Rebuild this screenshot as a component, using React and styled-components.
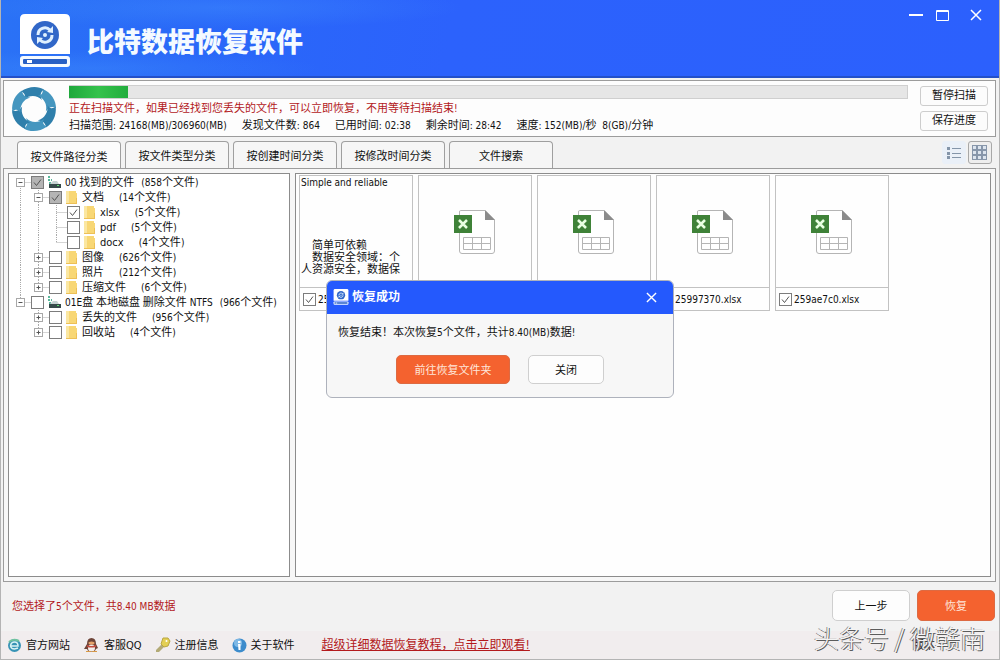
import React, { useState } from "react"
import styled, { createGlobalStyle } from "styled-components"

const GlobalStyle = createGlobalStyle`
  * {
    box-sizing: border-box;
  }

  body {
    margin: 0;
    font-family: "DejaVu Sans Condensed", "Noto Sans CJK SC", sans-serif;
    font-size: 11px;
    line-height: 15px;
    color: #111111;
    background: #f2f2f2;
  }

  button, input {
    font-family: inherit;
    font-size: inherit;
    margin: 0;
  }
`

const Window = styled.div`
  min-height: 100vh;
  display: flex;
  flex-direction: column;
  border: 1px solid #b4b4b4;
  border-top: 0;
  position: relative;
`

const TitleBar = styled.header`
  height: 78px;
  flex-shrink: 0;
  display: flex;
  justify-content: space-between;
  padding: 5px 13px 0 17px;
  background:
    radial-gradient(ellipse at 22% 10%, rgba(70, 150, 255, 0.35), transparent 22%),
    radial-gradient(ellipse at 9% 90%, rgba(70, 150, 255, 0.3), transparent 18%),
    linear-gradient(100deg, #2a72f6 0%, #2968f8 20%, #2c62fc 45%, #2c60fd 100%);
  border-bottom: 2px solid #2450c8;
`

const Brand = styled.div`
  display: flex;
  align-items: center;
  gap: 15px;
`

const AppTitle = styled.h1`
  margin: 0;
  padding-top: 4px;
  font-size: 27px;
  line-height: 32px;
  font-weight: 900;
  color: #f4faff;
`

const WindowButtons = styled.div`
  display: flex;
  align-self: flex-start;
  gap: 6px;
`

const IconButton = styled.button`
  width: 20px;
  height: 20px;
  padding: 0;
  display: flex;
  align-items: center;
  justify-content: center;
  border: 0;
  background: transparent;
  color: #ffffff;
`

const CloseButton = styled(IconButton)`
  margin-left: 8px;
`

const ScanPanel = styled.section`
  display: flex;
  align-items: center;
  margin: 2px 3px 0 2px;
  padding: 0 7px;
  height: 57px;
  gap: 12px;
  background: #fdfdfd;
  border: 1px solid #9c9c9c;

  > svg {
    flex-shrink: 0;
  }
`

const ScanInfo = styled.div`
  flex: 1;
  display: flex;
  flex-direction: column;
  gap: 2px;
`

const Track = styled.div`
  height: 14px;
  background: #e6e6e6;
  border: 1px solid #cfcfcf;
  border-left: 0;
`

const Bar = styled.div`
  height: 100%;
  background: linear-gradient(90deg, #1fa83c, #35c24c 50%, #22ad3d);
`

const ScanNotice = styled.p`
  margin: 0;
  color: #b3191c;
`

const Stats = styled.div`
  display: flex;
  gap: 15px;
`

const Num = styled.span`
  font-size: 10px;
  white-space: pre-wrap;
`

const Stack = styled.div`
  display: flex;
  flex-direction: column;
  gap: 5px;
`

const SmallButton = styled.button`
  width: 68px;
  height: 20px;
  padding: 0;
  line-height: 16px;
  color: #111111;
  background: #fcfcfc;
  border: 1px solid #cdcdcd;
  border-radius: 3px;
`

const TabRow = styled.div`
  display: flex;
  justify-content: space-between;
  align-items: flex-end;
  height: 31px;
  padding: 0 7px 0 16px;
`

const Tabs = styled.div`
  display: flex;
  align-items: flex-start;
  gap: 4px;
`

const Tab = styled.button`
  width: 104px;
  height: ${props => (props.$active ? "28px" : "27px")};
  padding: 0;
  color: #111111;
  background: ${props => (props.$active ? "#fcfcfc" : "#f6f6f6")};
  border: 1px solid #9f9f9f;
  border-bottom: 0;
  border-radius: 4px 4px 0 0;
  margin-bottom: ${props => (props.$active ? "-1px" : "0")};
`

const ViewSwitch = styled.div`
  display: flex;
  gap: 2px;
  align-self: center;
`

const ViewButton = styled.button`
  width: 24px;
  height: 23px;
  padding: 0;
  display: flex;
  align-items: center;
  justify-content: center;
  background: ${props => (props.$active ? "#eeeeee" : "#eaf0f8")};
  border: 1px solid ${props => (props.$active ? "#a8a8a8" : "#eaf0f8")};
  border-radius: 3px;
`

const Workspace = styled.main`
  flex: 1;
  display: flex;
  gap: 5px;
  margin: 0 3px 0 2px;
  padding: 4px;
  background: #f7f7f7;
  border: 1px solid #9c9c9c;
`

const TreePanel = styled.div`
  width: 282px;
  flex-shrink: 0;
  padding: 1px 7px;
  background: #ffffff;
  border: 1px solid #8c8c8c;
`

const TreeList = styled.ul`
  list-style: none;
  margin: 0;
  padding: 0;
`

const TreeItem = styled.li`
  display: flex;
  align-items: center;
  height: 15px;
  white-space: nowrap;
`

const CheckBoxWrap = styled.span`
  display: inline-grid;
  flex-shrink: 0;

  > * {
    grid-area: 1 / 1;
  }

  svg {
    pointer-events: none;
  }
`

const Check = styled.input`
  appearance: none;
  width: 13px;
  height: 13px;
  border: 1px solid #7c7c7c;
  background: ${props => (props.$partial ? "#b4b4b4" : "#ffffff")};
`

const TreeLabel = styled.label`
  display: flex;
  align-items: center;
  gap: ${props => (props.$root ? "7px" : "15px")};
  margin-left: 3px;
`

const IconSlot = styled.span`
  display: inline-block;
  height: 15px;
  vertical-align: top;
  margin-right: 4px;

  svg {
    display: block;
  }
`

const FilePanel = styled.div`
  flex: 1;
  padding: 1px 3px;
  background: #fefefe;
  border: 1px solid #8c8c8c;
`

const FileGrid = styled.div`
  display: grid;
  grid-template-columns: repeat(auto-fill, 114px);
  gap: 5px;
`

const FileCard = styled.div`
  height: 136px;
  display: flex;
  flex-direction: column;
  background: #fefefe;
  border: 1px solid #c2c2c2;
`

const Thumb = styled.div`
  flex: 1;
  display: flex;
  align-items: center;
  justify-content: center;
  border-bottom: 1px solid #c2c2c2;
`

const DocPreview = styled.div`
  align-self: stretch;
  flex: 1;
  display: flex;
  flex-direction: column;
  justify-content: space-between;
  padding: 1px 9px 11px 1px;
  line-height: 12px;
`

const DocTitle = styled.p`
  margin: 0;
  font-size: 10px;
  white-space: nowrap;
`

const DocText = styled.p`
  margin: 0;
  text-indent: 11px;
  word-break: break-all;
`

const Caption = styled.label`
  height: 22px;
  display: flex;
  align-items: center;
  gap: 2px;
  padding-left: 3px;
`

const Footer = styled.footer`
  flex-shrink: 0;
`

const ActionRow = styled.div`
  height: 49px;
  display: flex;
  align-items: center;
  justify-content: space-between;
  padding: 0 4px 3px 11px;
`

const Selected = styled.p`
  margin: 0;
  padding-top: 3px;
  color: #b3191c;
`

const Actions = styled.div`
  display: flex;
  gap: 7px;
`

const Button = styled.button`
  width: ${props => props.$width || "78px"};
  height: ${props => props.$height || "31px"};
  padding: 0;
  color: ${props => (props.$primary ? "#ffe6da" : "#111111")};
  background: ${props => (props.$primary ? "#f4622f" : "#fdfdfd")};
  border: 1px solid ${props => (props.$primary ? "#dd6a42" : "#cfcfcf")};
  border-radius: 5px;
`

const LinkRow = styled.nav`
  height: 28px;
  display: flex;
  align-items: center;
  gap: 13px;
  padding: 0 12px 0 6px;
  background: #f1edee;
`

const FootLink = styled.a`
  display: flex;
  align-items: center;
  gap: 4px;
  color: #111111;
  text-decoration: none;
`

const GuideLink = styled.a`
  margin-left: 14px;
  font-size: 12px;
  color: #b3191c;
  text-decoration: underline;
`

const Version = styled.span`
  margin-left: auto;
  padding-right: 52px;
`

const Watermark = styled.div`
  position: absolute;
  right: 14px;
  bottom: 7px;
  font-family: "Noto Sans CJK SC", sans-serif;
  font-size: 25px;
  line-height: 30px;
  font-weight: 300;
  color: #f4f4f4;
  text-shadow: 1px 1px 0 #5c5c5c, -1px 0 0 #8a8a8a;
  white-space: nowrap;
`

const Overlay = styled.div`
  position: absolute;
  inset: 0;
  display: flex;
  align-items: center;
  justify-content: center;
  padding-top: 18px;
`

const Dialog = styled.div`
  width: 348px;
  background: #f7f7f7;
  border: 1px solid #aeb2bc;
  border-radius: 6px;
  overflow: hidden;
`

const DialogHead = styled.div`
  height: 33px;
  display: flex;
  align-items: center;
  gap: 3px;
  padding: 0 12px 0 6px;
  color: #ffffff;
  background: #2459fd;
`

const DialogTitle = styled.h2`
  flex: 1;
  margin: 0;
  font-size: 12px;
  font-weight: 700;
`

const DialogBody = styled.div`
  padding: 11px 11px 13px;
`

const DialogText = styled.p`
  margin: 0 0 15px;
`

const DialogActions = styled.div`
  display: flex;
  justify-content: center;
  gap: 18px;
`

const tree = [
  { level: 0, open: true, first: true, label: "00 找到的文件", count: 858, state: "partial" },
  { level: 1, open: true, trunk: true, label: "文档", count: 14, state: "partial" },
  { level: 2, trunk: true, label: "xlsx", count: 5, state: "on" },
  { level: 2, trunk: true, label: "pdf", count: 5 },
  { level: 2, trunk: true, label: "docx", count: 4, last: true },
  { level: 1, trunk: true, label: "图像", count: 626 },
  { level: 1, trunk: true, label: "照片", count: 212 },
  { level: 1, trunk: true, label: "压缩文件", count: 6, last: true },
  { level: 0, open: true, last: true, label: "01E盘 本地磁盘 删除文件 NTFS", count: 966 },
  { level: 1, label: "丢失的文件", count: 956 },
  { level: 1, label: "回收站", count: 4, last: true },
]

const files = ["2597c1e0.xlsx", "2597f3a0.xlsx", "25983b60.xlsx", "25997370.xlsx", "259ae7c0.xlsx"]
const tabs = ["按文件路径分类", "按文件类型分类", "按创建时间分类", "按修改时间分类", "文件搜索"]

// Latin runs are set one size under the Chinese text
const Mixed = ({ children }) =>
  children.split(/([\x20-\x7e]+)/).map((part, i) => (i % 2 ? <Num key={i}>{part}</Num> : part))

const Tick = ({ id, state, label }) => {
  const [on, setOn] = useState(!!state)
  return (
    <CheckBoxWrap>
      <Check
        id={id}
        type="checkbox"
        aria-label={label}
        checked={on}
        $partial={state === "partial"}
        onChange={() => setOn(!on)}
      />
      {on && (
        <svg width="13" height="13" fill="none" stroke="#555">
          <path d="M3 6.5 5.5 9.5 10 3.5" />
        </svg>
      )}
    </CheckBoxWrap>
  )
}

const Branch = ({ level, open, first, last, trunk }) => {
  const x = level * 18 + 4.5
  return (
    <svg width={level * 18 + 15} height="15" fill="none" stroke="#aaa" strokeDasharray="1 1">
      {trunk && <path d="M4.5 0V15" />}
      {level === 2 && <path d="M22.5 0V15" />}
      <path d={`M${x} ${first ? 7 : 0}V${last ? 7 : 15}M${x} 7.5H${x + 11}`} />
      {level < 2 && (
        <g strokeDasharray="none">
          <rect x={x - 4} y="3.5" width="8" height="8" fill="#fff" stroke="#a8a8a8" />
          <path d={`M${x - 2} 7.5H${x + 2}${open ? "" : `M${x} 5.5V9.5`}`} stroke="#555" />
        </g>
      )}
    </svg>
  )
}

const DiskLogo = ({ width, height }) => (
  <svg width={width} height={height} viewBox="0 0 54 54">
    <path d="M7 0H47Q52 0 52 5V40H2V5Q2 0 7 0Z" fill="#fff" />
    <rect x="2" y="42" width="50" height="11" rx="3" fill="#f5faff" />
    <rect x="5" y="45" width="44" height="5" rx="1" fill="#2860c4" />
    <rect x="9" y="46" width="5" height="3" fill="#fff" />
    <circle cx="27" cy="21" r="14" fill="#3167c8" />
    <path d="M20 21A7 7 0 0 1 32 16M34 21A7 7 0 0 1 22 26" fill="none" stroke="#dff0ff" strokeWidth="3" />
    <path d="M29 18 35 19V12ZM25 24 19 23V30Z" fill="#dff0ff" />
    <circle cx="27" cy="21" r="2" fill="#dff0ff" />
  </svg>
)

const Swirl = () => (
  <svg width="46" height="46" viewBox="-23 -23 46 46">
    {[0, 60, 120, 180, 240, 300].map((a, i) => (
      <path
        key={a}
        transform={`rotate(${a})`}
        d="M-13 -17.500C-6 -23 4 -23.500 10 -19.500C6 -17 6 -13 8 -9C3 -14 -4 -14 -10 -10C-8 -13 -9 -16 -13 -17.500Z"
        fill={i % 2 ? "#4596bf" : "#2f7fab"}
      />
    ))}
  </svg>
)

const Folder = () => (
  <svg width="13" height="15">
    <path d="M1 1H11V3H12V14H1Z" fill="#f8d775" />
    <path d="M1 1H4V14H1Z" fill="#fbe7a2" />
    <path d="M11 8H12V14H1V13H11Z" fill="#edc057" />
  </svg>
)

const Drive = () => (
  <svg width="14" height="14">
    <path d="M1 2H4M1 5H5M2 8H5" stroke="#58b79a" strokeWidth="2" strokeDasharray="2 1" />
    <path d="M6 6H10L12 9H3Z" fill="#c6d3d2" />
    <rect x="2" y="9" width="12" height="4" fill="#374b4b" />
    <rect x="10" y="10" width="2" height="1" fill="#5dde70" />
  </svg>
)

const TreeIcon = ({ level }) => <IconSlot>{level === 0 ? <Drive /> : <Folder />}</IconSlot>

const Sheet = () => (
  <svg width="42" height="46" fill="none">
    <path d="M6.5 1.5H31L40.5 11V42Q40.5 44.5 38 44.5H8Q5.5 44.5 5.5 42V3Q5.5 1.5 6.5 1.5Z" fill="#fff" stroke="#b5b5b5" />
    <path d="M31 1 41 11H31Z" fill="#8b8b8b" />
    <rect x="0" y="6" width="18" height="18" fill="#3f8238" />
    <path d="M5 11 13 19M13 11 5 19" stroke="#e9ffe2" strokeWidth="2.5" />
    <path d="M9.5 28.5H36.5V40.5H9.5ZM9.5 34.5H36.5M18.5 28.5V40.5M27.5 28.5V40.5" stroke="#b5b5b5" />
  </svg>
)

const Close = ({ size }) => (
  <svg width={size} height={size} viewBox="0 0 12 12" stroke="#fff" strokeWidth="1.5">
    <path d="M1 1 11 11M11 1 1 11" />
  </svg>
)

const Globe = () => (
  <svg width="15" height="15" fill="none">
    <circle cx="7.5" cy="7.5" r="6.5" fill="#3793b5" />
    <path d="M3 8H11Q11 4 7.5 4T3.5 8Q4 11 7.5 11L11 10" stroke="#d9f4f4" strokeWidth="1.5" />
    <path d="M2 4Q6 0 12 3" stroke="#70c3a0" strokeWidth="2" />
  </svg>
)

const Penguin = () => (
  <svg width="17" height="16">
    <path d="M4 7Q4 1 8.5 1T13 7L15 11 13 12Q12 15 8.5 15T4 12L1 12Z" fill="#6e4438" />
    <ellipse cx="8.5" cy="11" rx="3.5" ry="3.5" fill="#f4eeea" />
    <ellipse cx="8.5" cy="6" rx="3" ry="1.5" fill="#e7a36a" />
    <path d="M4 8Q8 10 13 8V10Q8 11 4 10Z" fill="#c2493c" />
    <path d="M3 14H8V15H3ZM9 14H14V15H9Z" fill="#d99945" />
  </svg>
)

const Key = () => (
  <svg width="16" height="16">
    <path d="M7 7 1 13V15H4L10 9Z" fill="#b3aa76" />
    <path d="M8 1H13L15 4 13 9 9 10 6 7Z" fill="#e3cf53" stroke="#b9a640" />
    <circle cx="11.5" cy="4" r="1" fill="#fff" />
  </svg>
)

const Info = () => (
  <svg width="15" height="15">
    <circle cx="7.5" cy="7.5" r="7" fill="#3d8ccc" />
    <circle cx="6" cy="5" r="4" fill="#7fb9e6" />
    <path d="M6 6H8.5V12H6.5ZM6 3H8.5V5H6Z" fill="#fff" />
  </svg>
)

const App = () => {
  const [tab, setTab] = useState(0)
  const [dialog, setDialog] = useState(true)
  const progress = 7

  return (
    <Window>
      <GlobalStyle />
      <TitleBar>
        <Brand>
          <DiskLogo width={54} height={54} />
          <AppTitle>比特数据恢复软件</AppTitle>
        </Brand>
        <WindowButtons>
          <IconButton aria-label="最小化">
            <svg width="14" height="12" stroke="#fff" strokeWidth="2"><path d="M0 6H14" /></svg>
          </IconButton>
          <IconButton aria-label="最大化">
            <svg width="13" height="12" fill="none" stroke="#fff"><path d="M.5 1.5H12.5V11.5H.5ZM.5 2.5H12.5" /></svg>
          </IconButton>
          <CloseButton aria-label="关闭窗口"><Close size={12} /></CloseButton>
        </WindowButtons>
      </TitleBar>

      <ScanPanel>
        <Swirl />
        <ScanInfo>
          <Track role="progressbar" aria-valuenow={progress}>
            <Bar style={{ width: `${progress}%` }} />
          </Track>
          <ScanNotice><Mixed>正在扫描文件，如果已经找到您丢失的文件，可以立即恢复，不用等待扫描结束!</Mixed></ScanNotice>
          <Stats>
            <span><Mixed>扫描范围: 24168(MB)/306960(MB)</Mixed></span>
            <span><Mixed>发现文件数: 864</Mixed></span>
            <span><Mixed>已用时间: 02:38</Mixed></span>
            <span><Mixed>剩余时间: 28:42</Mixed></span>
            <span><Mixed>速度: 152(MB)/秒  8(GB)/分钟</Mixed></span>
          </Stats>
        </ScanInfo>
        <Stack>
          <SmallButton>暂停扫描</SmallButton>
          <SmallButton>保存进度</SmallButton>
        </Stack>
      </ScanPanel>

      <TabRow>
        <Tabs>
          {tabs.map((name, i) => (
            <Tab key={name} $active={tab === i} onClick={() => setTab(i)}>{name}</Tab>
          ))}
        </Tabs>
        <ViewSwitch>
          <ViewButton aria-label="列表">
            <svg width="16" height="14" stroke="#8495a9">
              <path d="M1 2.5H4M1 7.5H4M1 11.5H4" strokeWidth="3" />
              <path d="M6 2.5H15M6 7.5H15M6 11.5H15" />
            </svg>
          </ViewButton>
          <ViewButton aria-label="图标" $active>
            <svg width="16" height="16" fill="#dce4ee" stroke="#8796aa">
              {[0, 5, 10].map(y => [0, 5, 10].map(x => <rect key={x + "-" + y} x={x + 0.5} y={y + 0.5} width="4" height="4" />))}
            </svg>
          </ViewButton>
        </ViewSwitch>
      </TabRow>

      <Workspace>
        <TreePanel>
          <TreeList>
            {tree.map(node => (
              <TreeItem key={node.label}>
                <Branch {...node} />
                <Tick id={"t-" + node.label} state={node.state} />
                <TreeLabel htmlFor={"t-" + node.label} $root={node.level === 0}>
                  <span>
                    <TreeIcon level={node.level} />
                    {node.level === 2 ? node.label : <Mixed>{node.label}</Mixed>}
                  </span>
                  <span><Mixed>{`(${node.count}个文件)`}</Mixed></span>
                </TreeLabel>
              </TreeItem>
            ))}
          </TreeList>
        </TreePanel>
        <FilePanel>
          <FileGrid>
            {files.map((name, i) => (
              <FileCard key={name}>
                <Thumb>
                  {i === 0 ? (
                    <DocPreview>
                      <DocTitle>Simple and reliable</DocTitle>
                      <div>
                        <DocText>简单可依赖</DocText>
                        <DocText>数据安全领域：个人资源安全，数据保</DocText>
                      </div>
                    </DocPreview>
                  ) : (
                    <Sheet />
                  )}
                </Thumb>
                <Caption>
                  <Tick state="on" label={name} />
                  <Num>{name}</Num>
                </Caption>
              </FileCard>
            ))}
          </FileGrid>
        </FilePanel>
      </Workspace>

      <Footer>
        <ActionRow>
          <Selected><Mixed>您选择了5个文件，共8.40 MB数据</Mixed></Selected>
          <Actions>
            <Button>上一步</Button>
            <Button $primary>恢复</Button>
          </Actions>
        </ActionRow>
        <LinkRow>
          <FootLink href="#site"><Globe />官方网站</FootLink>
          <FootLink href="#qq"><Penguin />客服QQ</FootLink>
          <FootLink href="#register"><Key />注册信息</FootLink>
          <FootLink href="#about"><Info />关于软件</FootLink>
          <GuideLink href="#guide">超级详细数据恢复教程，点击立即观看!</GuideLink>
          <Version>版本</Version>
        </LinkRow>
      </Footer>

      {dialog && (
        <Overlay>
          <Dialog role="dialog" aria-labelledby="done-title">
            <DialogHead>
              <DiskLogo width={16} height={16} />
              <DialogTitle id="done-title">恢复成功</DialogTitle>
              <IconButton aria-label="关闭提示" onClick={() => setDialog(false)}><Close size={11} /></IconButton>
            </DialogHead>
            <DialogBody>
              <DialogText><Mixed>恢复结束！本次恢复5个文件，共计8.40(MB)数据!</Mixed></DialogText>
              <DialogActions>
                <Button $primary $width="114px" $height="29px">前往恢复文件夹</Button>
                <Button $width="76px" $height="29px" onClick={() => setDialog(false)}>关闭</Button>
              </DialogActions>
            </DialogBody>
          </Dialog>
        </Overlay>
      )}
      <Watermark>头条号 / 微赣南</Watermark>
    </Window>
  )
}

export default App
